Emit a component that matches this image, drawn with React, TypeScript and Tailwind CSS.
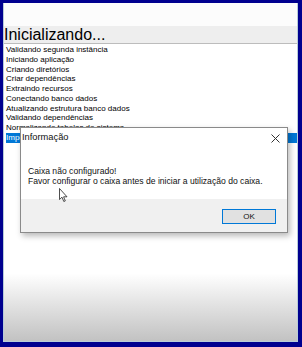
import React from "react";

const items = [
  "Validando segunda instância",
  "Iniciando aplicação",
  "Criando diretórios",
  "Criar dependências",
  "Extraindo recursos",
  "Conectando banco dados",
  "Atualizando estrutura banco dados",
  "Validando dependências",
  "Normalizando tabelas do sistema",
];

export default function App() {
  return (
    <div className="w-[302px] h-[347px] bg-[#00008f] pt-[3px] pl-[3px] pr-[4px] pb-[5px]" style={{ fontFamily: '"Liberation Sans", Arial, sans-serif' }}>
      <div className="relative flex flex-col h-full bg-linear-to-b from-white from-[80%] to-[#c2c2c2] border-l border-b border-r border-[#b8ccd8]">
        <div className="h-[23px] bg-[#fcfcfc]" />
        <div className="h-[18px] bg-[#eeeeee] border-b border-[#bcbcbc] text-[16px] leading-[18px] text-black pl-[0px]">
          Inicializando...
        </div>
        <div className="flex flex-col pt-[1px] text-[8px] text-black">
          {items.map((t) => (
            <div key={t} className="h-[9.75px] leading-[9.75px] pl-[2px] whitespace-nowrap">
              {t}
            </div>
          ))}
          <div className="h-[9.75px] leading-[9.75px] ml-[2px] bg-[#0078d7] text-white whitespace-nowrap">
            Importando configurações
          </div>
        </div>

        <div className="absolute left-[16px] top-[124px] w-[268px] h-[106px] flex flex-col bg-white border border-[#8a8a8a] shadow-[2px_3px_6px_rgba(0,0,0,0.28)]">
          <div className="h-[20px] flex items-center justify-between pl-[1px] pr-[7px]">
            <span className="text-[9.3px] text-[#111]">Informação</span>
            <svg width="9" height="9" viewBox="0 0 9 9">
              <path d="M0.5 0.5 L8.5 8.5 M8.5 0.5 L0.5 8.5" stroke="#333" strokeWidth="1" />
            </svg>
          </div>
          <div className="relative h-[51px] pt-[18px] pl-[7px] text-[8.6px] leading-[10px] text-[#111]">
            <div>Caixa não configurado!</div>
            <div className="whitespace-nowrap">Favor configurar o caixa antes de iniciar a utilização do caixa.</div>
            <svg className="absolute left-[38px] top-[40px]" width="9" height="15" viewBox="0 0 9 15">
              <path d="M0.5 0.5 L0.5 11.5 L3 9.2 L4.8 13.5 L6.3 12.9 L4.6 8.8 L8 8.8 Z" fill="white" stroke="#222" strokeWidth="0.8" strokeLinejoin="round" />
            </svg>
          </div>
          <div className="flex-1 bg-[#f0f0f0] flex justify-end items-start pt-[10px] pr-[11px]">
            <div className="w-[54px] h-[15px] border border-[#0078d7] bg-[#e1e1e1] flex items-center justify-center text-[8px] text-[#111]">
              OK
            </div>
          </div>
        </div>
      </div>
    </div>
  );
}
